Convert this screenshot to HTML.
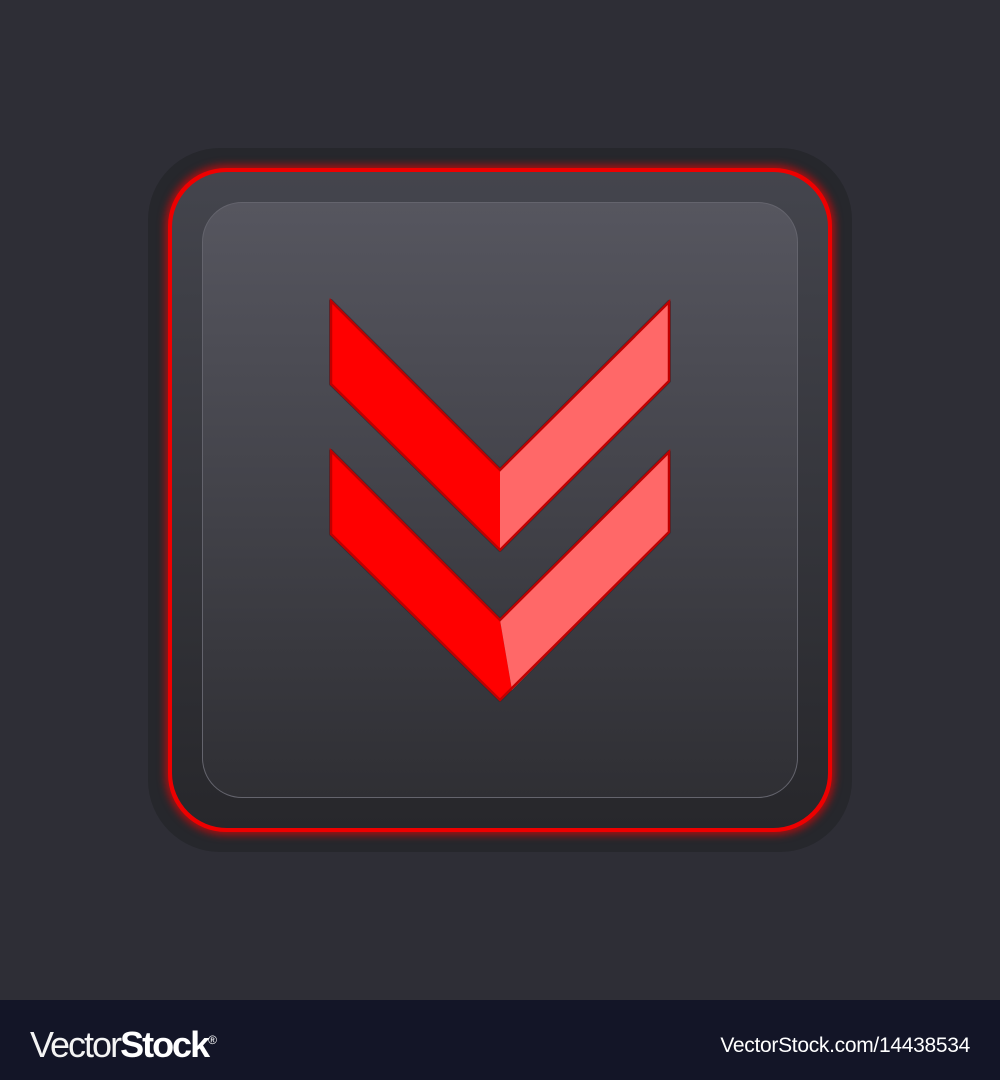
<!DOCTYPE html>
<html><head><style>
html,body{margin:0;padding:0}
body{width:1000px;height:1080px;background:#2e2e36;position:relative;overflow:hidden;font-family:"Liberation Sans",sans-serif}
.rim{position:absolute;left:148px;top:148px;width:704px;height:704px;border-radius:72px;background:#26272c}
.red{position:absolute;left:168px;top:168px;width:664px;height:664px;border-radius:58px;background:#e00;box-shadow:0 0 8px 3px rgba(255,0,0,.6)}
.body{position:absolute;left:172px;top:172px;width:656px;height:656px;border-radius:55px;background:linear-gradient(#44454d,#27272b)}
.panel{position:absolute;left:202px;top:202px;width:594px;height:594px;border-radius:40px;border:1.5px solid #64646d;background:linear-gradient(#56565f,#2f2f34)}
.bar{position:absolute;left:0;top:1000px;width:1000px;height:80px;background:#131527;color:#fff}
</style></head><body>
<div class="rim"></div><div class="red"></div><div class="body"></div><div class="panel"></div>
<svg width="1000" height="1000" style="position:absolute;left:0;top:0">
<g stroke="#2a2a30" stroke-width="4" fill="none" stroke-linejoin="round" opacity=".7">
<polygon points="331,301 500,470 669,302 669,381 500,550 331,384"/>
<polygon points="331,451 500,620 669,452 669,532 500,700 331,534"/>
</g>
<polygon points="331,301 500,470 500,550 331,384" fill="#ff0000"/>
<polygon points="500,470 669,302 669,381 500,550" fill="#ff6868"/>
<polygon points="331,451 500,620 512,690 500,700 331,534" fill="#ff0000"/>
<polygon points="500,620 669,452 669,532 512,690" fill="#ff6868"/>
<g stroke="#c00000" stroke-width="2.5" fill="none" stroke-linejoin="miter">
<polygon points="331,301 500,470 669,302 669,381 500,550 331,384"/>
<polygon points="331,451 500,620 669,452 669,532 500,700 331,534"/>
</g>
</svg>
<div class="bar">
<div style="position:absolute;left:30px;top:20px;font-size:36px;letter-spacing:-2px;line-height:40px"><span style="font-weight:100;color:#f4f4f4">Vector</span><b>Stock</b><sup style="font-size:12px">®</sup></div>
<div style="position:absolute;right:30px;top:34px;font-size:21px;letter-spacing:-0.3px">VectorStock.com/14438534</div>
</div>
</body></html>
